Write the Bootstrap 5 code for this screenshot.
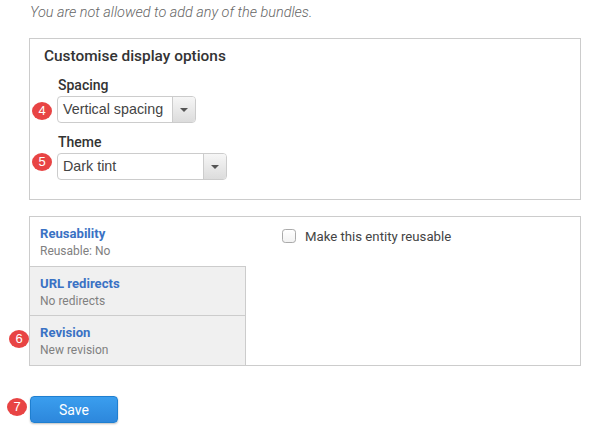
<!DOCTYPE html>
<html lang="en">
<head>
  <meta charset="UTF-8">
  <title>Display options</title>
  <link rel="stylesheet" href="https://cdn.jsdelivr.net/npm/bootstrap@5.3.2/dist/css/bootstrap.min.css">
<style>
html, body {
  height: 431px;
  overflow: hidden;
}

body {
  position: relative;
  font-family: Roboto, sans-serif;
  font-size: 13px;
  color: #333;
  background: #fff;
  padding-left: 29px;
  box-sizing: content-box;
  width: 552px;
}

.intro {
  font-size: 14.45px;
  font-weight: 300;
  font-style: italic;
  color: #666;
  margin: 0;
  height: 38px;
  padding-top: 4px;
  line-height: 17px;
  padding-left: 1px;
}

.panelBox {
  border: 1px solid #ccc;
}

.displayBox {
  height: 162px;
  padding: 8px 14px 0;
}

.displayBox h2 {
  font-size: 15.4px;
  font-weight: 500;
  line-height: 18px;
  margin: 0 0 12px;
  color: #333;
}

.fieldLabel {
  display: block;
  font-size: 14px;
  font-weight: 500;
  line-height: 16px;
  margin: 0 0 3px 14px;
  color: #333;
}

.fakeSelect {
  display: flex;
  height: 27px;
  margin-left: 13px;
  border: 1px solid #ccc;
  border-radius: 4px;
  font-family: "Liberation Sans", Arial, sans-serif;
  font-size: 14.3px;
  color: #444;
  background: #fff;
  overflow: hidden;
  margin-bottom: 11px;
}

.selectText {
  flex: 1;
  padding-left: 5px;
  line-height: 25px;
}

.selectArrow {
  width: 23px;
  border-left: 1px solid #ccc;
  background: linear-gradient(#f6f6f6, #dcdcdc);
  display: flex;
  align-items: center;
  justify-content: center;
}

.selectArrow::after {
  content: "";
  border-left: 4px solid transparent;
  border-right: 4px solid transparent;
  border-top: 4px solid #555;
}

.sizeSpacing { width: 139px; }
.sizeTheme { width: 170px; }

.tabsBox {
  margin-top: 16px;
  height: 150px;
  display: flex;
}

.tabsCol {
  width: 216px;
  flex: none;
}

.tabItem {
  height: 49px;
  padding: 8px 10px 0;
  background: #f0f0f0;
  border-right: 1px solid #ccc;
  border-top: 1px solid #ccc;
  line-height: 17px;
}

.tabItem:first-child {
  background: #fff;
  border-right: 0;
  border-top: 0;
  height: 49px;
}

.tabItem:last-child {
  height: 50px;
}

.tabItem a {
  display: block;
  color: #3a72c4;
  font-size: 13.1px;
  font-weight: 700;
  text-decoration: none;
}

.tabItem span {
  font-size: 12px;
  color: #808080;
}

.reuseCol {
  padding: 12px 0 0 36px;
}

.reuseCheck {
  width: 14px;
  height: 14px;
  margin: 0;
  border: 1px solid #aaa;
  border-radius: 3px;
  background: linear-gradient(#fff, #f2f2f2);
  flex: none;
}

.reuseCol label {
  font-size: 13.2px;
  color: #444;
  line-height: 16px;
  margin-left: 1px;
}

.saveBtn {
  display: block;
  margin: 30px 0 0 1px;
  width: 88px;
  height: 27px;
  padding: 1px 0 0;
  border: 1px solid #1f7fd0;
  border-radius: 4px;
  background: linear-gradient(#3a9eee, #2d87dc);
  color: #fff;
  font-size: 14px;
  font-weight: 400;
  box-shadow: 0 1px 2px rgba(0, 0, 0, 0.25);
}

.stepDot {
  position: absolute;
  width: 20px;
  height: 18px;
  border-radius: 50%;
  background: #e84444;
  color: #fff;
  font-family: "Liberation Sans", Arial, sans-serif;
  font-size: 13px;
  line-height: 18px;
  text-align: center;
}

.dot4 { left: 32px; top: 102px; }
.dot5 { left: 32px; top: 153px; }
.dot6 { left: 9px; top: 330px; }
.dot7 { left: 7px; top: 398px; }
</style>
</head>
<body>
  <p class="intro">You are not allowed to add any of the bundles.</p>

  <div class="panelBox displayBox">
    <h2>Customise display options</h2>
    <label class="fieldLabel">Spacing</label>
    <div class="fakeSelect sizeSpacing">
      <div class="selectText">Vertical spacing</div>
      <div class="selectArrow"></div>
    </div>
    <label class="fieldLabel">Theme</label>
    <div class="fakeSelect sizeTheme">
      <div class="selectText">Dark tint</div>
      <div class="selectArrow"></div>
    </div>
  </div>

  <div class="panelBox tabsBox">
    <div class="tabsCol">
      <div class="tabItem"><a href="#">Reusability</a><span>Reusable: No</span></div>
      <div class="tabItem"><a href="#">URL redirects</a><span>No redirects</span></div>
      <div class="tabItem"><a href="#">Revision</a><span>New revision</span></div>
    </div>
    <div class="reuseCol d-flex gap-2 align-items-start">
      <input class="form-check-input reuseCheck" type="checkbox" id="reuse">
      <label for="reuse">Make this entity reusable</label>
    </div>
  </div>

  <button class="btn saveBtn" type="button">Save</button>

  <span class="stepDot dot4">4</span>
  <span class="stepDot dot5">5</span>
  <span class="stepDot dot6">6</span>
  <span class="stepDot dot7">7</span>

  <script src="https://cdn.jsdelivr.net/npm/bootstrap@5.3.2/dist/js/bootstrap.bundle.min.js"></script>
</body>
</html>
